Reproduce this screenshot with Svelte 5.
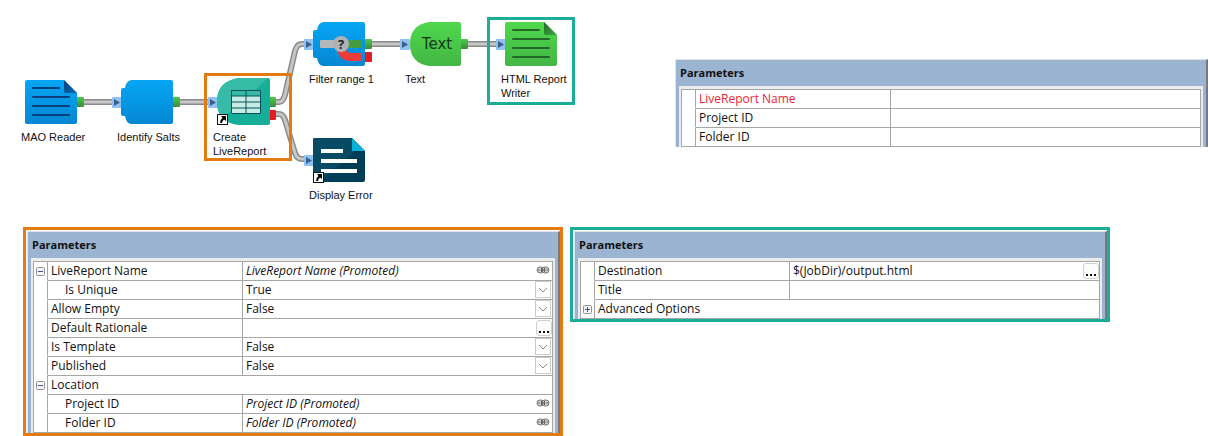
<script lang="ts">
  type Row = {
    name: string;
    value?: string;
    kind?: 'text' | 'select' | 'browse' | 'promoted' | 'group';
    indent?: boolean;
    required?: boolean;
    toggle?: 'open' | 'closed';
  };

  // Grid cell of each component on the protocol canvas
  const nodes = [
    { kind: 'reader', label: ['MAO Reader'], col: 0, row: 1, input: false, outputs: ['pass'] },
    { kind: 'filter', label: ['Identify Salts'], col: 1, row: 1, input: true, outputs: ['pass'] },
    { kind: 'report', label: ['Create', 'LiveReport'], col: 2, row: 1, input: true, outputs: ['pass', 'fail'], shortcut: true },
    { kind: 'range', label: ['Filter range 1'], col: 3, row: 0, input: true, outputs: ['pass', 'fail'] },
    { kind: 'text', label: ['Text'], col: 4, row: 0, input: true, outputs: ['pass'] },
    { kind: 'writer', label: ['HTML Report', 'Writer'], col: 5, row: 0, input: true, outputs: [] },
    { kind: 'error', label: ['Display Error'], col: 3, row: 2, input: true, outputs: [], shortcut: true }
  ];

  const wires = [
    'M83 102H113',
    'M179 102H209',
    'M275 102H279Q283 102 285 95L295 51Q297 44 302 44H305',
    'M275 114H279Q283 114 285 120L295 153Q297 159 302 159H305',
    'M371 44H401',
    'M467 44H497'
  ];

  const marks = [
    { color: 'orange', x: 204, y: 73 },
    { color: 'teal', x: 487, y: 17 }
  ];

  const jobParams: Row[] = [
    { name: 'LiveReport Name', required: true },
    { name: 'Project ID' },
    { name: 'Folder ID' }
  ];

  const reportParams: Row[] = [
    { name: 'LiveReport Name', value: 'LiveReport Name (Promoted)', kind: 'promoted', toggle: 'open' },
    { name: 'Is Unique', value: 'True', kind: 'select', indent: true },
    { name: 'Allow Empty', value: 'False', kind: 'select' },
    { name: 'Default Rationale', kind: 'browse' },
    { name: 'Is Template', value: 'False', kind: 'select' },
    { name: 'Published', value: 'False', kind: 'select' },
    { name: 'Location', kind: 'group', toggle: 'open' },
    { name: 'Project ID', value: 'Project ID (Promoted)', kind: 'promoted', indent: true },
    { name: 'Folder ID', value: 'Folder ID (Promoted)', kind: 'promoted', indent: true }
  ];

  const writerParams: Row[] = [
    { name: 'Destination', value: '$(JobDir)/output.html', kind: 'browse' },
    { name: 'Title' },
    { name: 'Advanced Options', kind: 'group', toggle: 'closed' }
  ];
</script>

{#snippet page(fill: string, fold: string, line: string)}
  <path d="M2 0H39L52 13V42Q52 44 50 44H2Q0 44 0 42V2Q0 0 2 0Z" fill={fill} />
  <path d="M39 0L52 13H41Q39 13 39 11Z" fill={fold} />
  <path d="M8 8H34M8 17H44M8 26H44M8 35H44" stroke={line} stroke-width="2" stroke-linecap="round" />
{/snippet}

{#snippet block()}
  <path d="M10 0H50Q52 0 52 2V42Q52 44 50 44H10Q5 43 4 36H2Q0 36 0 34V10Q0 8 2 8H4Q5 1 10 0Z" fill="url(#blue)" />
{/snippet}

{#snippet art(kind: string)}
  {#if kind === 'reader'}
    {@render page('url(#blue)', 'url(#blue-fold)', '#063f7c')}
  {:else if kind === 'writer'}
    {@render page('url(#green)', 'url(#green-fold)', '#23682a')}
  {:else if kind === 'filter'}
    {@render block()}
  {:else if kind === 'range'}
    {@render block()}
    <path d="M24 27H33Q34 31 38 31H48Q49 31 49 32V38Q49 39 48 39H36Q26 38 24 27Z" fill="#ee3a38" />
    <path d="M8 18H24V26H8Q7 26 7 25V19Q7 18 8 18Z" fill="#b4b8ba" />
    <path d="M30 18H48Q49 18 49 19V26H30Z" fill="#429d43" />
    <circle cx="28" cy="22" r="8" fill="#aeb2b5" />
    <text class="query" x="28" y="27" text-anchor="middle">?</text>
  {:else if kind === 'report'}
    <path d="M22 -2H51Q53 -2 53 0V43Q53 45 51 45H22Q0 43 0 22Q0 1 22 -2Z" fill="#16ae98" />
    <path d="M22 -2H51L6 38Q0 31 0 22Q0 1 22 -2Z" fill="#36bba7" />
    <rect x="14" y="10" width="30" height="24" fill="#c6ece6" />
    <rect x="14" y="10" width="30" height="6" fill="#35b8a4" />
    <path d="M14.500 10.500H43.500V33.500H14.500ZM29 10V34M14 16H44M14 22H44M14 28H44" fill="none" stroke="#08515a" />
  {:else if kind === 'text'}
    <path d="M20 0H50Q52 0 52 2V42Q52 44 50 44H20Q1 41 1 22Q1 3 20 0Z" fill="url(#green)" />
    <text class="glyph" x="28" y="27" text-anchor="middle">Text</text>
  {:else if kind === 'error'}
    <path d="M2 0H39L52 13V42Q52 44 50 44H2Q0 44 0 42V2Q0 0 2 0Z" fill="#003d57" />
    <path d="M2 0H39L45 10L7 44H2Q0 44 0 42V2Q0 0 2 0Z" fill="#074a63" />
    <path d="M39 0L52 13H39Z" fill="#00b2d8" />
    <path d="M8 13H30M8 23H44M8 33H44" stroke="#fff" stroke-width="4" />
  {/if}
{/snippet}

{#snippet parameters(id: string, rows: Row[])}
  <section class="panel" aria-labelledby="{id}-title">
    <h2 id="{id}-title">Parameters</h2>
    <div class="well">
      <table>
        <tbody>
          {#each rows as row, i}
            <tr>
              <td class="gutter">
                {#if row.toggle}
                  <button class="toggle" aria-label={row.name} aria-expanded={row.toggle === 'open'}>
                    <svg width="9" height="9" viewBox="0 0 9 9">
                      <rect x="0.5" y="0.5" width="8" height="8" rx="1" fill="#f6f6f6" stroke="#919191" />
                      <path d={row.toggle === 'open' ? 'M2 4.500H7' : 'M2 4.500H7M4.500 2V7'} stroke="#3f55a5" />
                    </svg>
                  </button>
                {/if}
              </td>
              {#if row.kind === 'group'}
                <th colspan="2" scope="row">{row.name}</th>
              {:else}
                <th scope="row" class:indent={row.indent} class:required={row.required}>
                  <label for="{id}-{i}">{row.name}</label>
                </th>
                <td class="value">
                  <div class="field">
                    {#if row.kind === 'select'}
                      <select id="{id}-{i}" value={row.value}>
                        <option>True</option>
                        <option>False</option>
                      </select>
                      <svg class="arrow" width="17" height="18" viewBox="0 0 17 18" fill="none">
                        <rect x="0.5" y="0.5" width="15" height="16" fill="#fff" stroke="#cacaca" />
                        <path d="M4 7L8 11L12 7" stroke="#8a8a8a" />
                      </svg>
                    {:else}
                      <input
                        id="{id}-{i}"
                        type="text"
                        value={row.value ?? ''}
                        class:promoted={row.kind === 'promoted'}
                        readonly={row.kind === 'promoted'}
                      />
                      {#if row.kind === 'browse'}
                        <button class="browse" aria-label="Browse">
                          <svg width="12" height="14" viewBox="0 0 12 14">
                            <path d="M1 10H3V12H1ZM5 10H7V12H5ZM9 10H11V12H9Z" fill="#111" />
                          </svg>
                        </button>
                      {:else if row.kind === 'promoted'}
                        <svg class="chain" width="14" height="8" viewBox="0 0 14 8" fill="none">
                          <rect x="1" y="1" width="7" height="6" rx="3" fill="#d0d0d0" stroke="#777" />
                          <rect x="6" y="1" width="7" height="6" rx="3" fill="#d0d0d0" stroke="#777" />
                          <path d="M3 3V5M5.500 2V6M8.500 2V6M11 3V5" stroke="#666" />
                          <path d="M5 4H9" stroke="#444" />
                        </svg>
                      {/if}
                    {/if}
                  </div>
                </td>
              {/if}
            </tr>
          {/each}
        </tbody>
      </table>
    </div>
  </section>
{/snippet}

<main>
  <div class="top">
    <div class="canvas">
      <svg class="wires" width="675" height="227" viewBox="0 0 675 227" fill="none">
        <defs>
          <linearGradient id="blue" x1="0" y1="0" x2="0" y2="1">
            <stop offset="0" stop-color="#05a6f4" />
            <stop offset="1" stop-color="#0587d3" />
          </linearGradient>
          <linearGradient id="green" x1="0" y1="0" x2="0" y2="1">
            <stop offset="0" stop-color="#4fd84d" />
            <stop offset="1" stop-color="#43b643" />
          </linearGradient>
          <linearGradient id="pass" x1="0" y1="0" x2="0" y2="1">
            <stop offset="0" stop-color="#4ccb4b" />
            <stop offset="1" stop-color="#3a8d3c" />
          </linearGradient>
          <linearGradient id="blue-fold" x1="0" y1="0" x2="1" y2="1">
            <stop offset="0" stop-color="#033f78" />
            <stop offset="1" stop-color="#0a6db5" />
          </linearGradient>
          <linearGradient id="green-fold" x1="0" y1="0" x2="1" y2="1">
            <stop offset="0" stop-color="#1f6a25" />
            <stop offset="1" stop-color="#45a545" />
          </linearGradient>
        </defs>
        {#each wires as d}
          <path {d} stroke="#8a8a8a" stroke-width="6" />
          <path {d} stroke="#c6c6c6" stroke-width="3" />
        {/each}
      </svg>

      {#each nodes as node}
        <div class="node" style="left: {16 + node.col * 96}px; top: {20 + node.row * 58}px">
          <svg width="68" height="48" viewBox="-9 -2 68 48">
            {#if node.input}
              <rect x="-9" y="17" width="10" height="11" rx="1" fill="#8fc1f5" />
              <path d="M-7 19L-1 22.500L-7 26Z" fill="#3c5f86" />
            {/if}
            {#each node.outputs as out, i}
              <rect
                x="51"
                y={17 + i * 13}
                width="8"
                height="10"
                rx="1"
                fill={out === 'pass' ? 'url(#pass)' : '#e31b23'}
              />
            {/each}
            {@render art(node.kind)}
            {#if node.shortcut}
              <rect x="0.5" y="34.500" width="10" height="10" fill="#fff" stroke="#111" />
              <path d="M4 36H9V41L7 39.500Q5 41 5 43H3Q3 39.500 5.500 38Z" fill="#000" />
            {/if}
          </svg>
          <p>
            {#each node.label as line}<span>{line}</span>{/each}
          </p>
        </div>
      {/each}

      {#each marks as mark}
        <div class="mark {mark.color}" style="left: {mark.x}px; top: {mark.y}px"></div>
      {/each}
    </div>

    {@render parameters('job', jobParams)}
  </div>

  <div class="bottom">
    <div class="frame orange">{@render parameters('report', reportParams)}</div>
    <div class="frame teal">{@render parameters('writer', writerParams)}</div>
  </div>
</main>

<style>
  :global(body) {
    background: #fff;
  }

  main {
    color: #111;
    font: 12px/18px 'Open Sans', 'Noto Sans', sans-serif;
  }

  .top {
    display: grid;
    grid-template-columns: 675px 1fr;
    align-items: start;
  }

  .top > .panel {
    margin-top: 59px;
  }

  .canvas {
    position: relative;
    height: 227px;
  }

  .wires {
    display: block;
  }

  .node {
    position: absolute;
  }

  .node svg {
    display: block;
  }

  .node p {
    margin: 4px 0 0 5px;
    font: 11px/14px 'Liberation Sans', Arial, sans-serif;
    white-space: nowrap;
  }

  .node span {
    display: block;
  }

  .mark {
    position: absolute;
    width: 82px;
    height: 82px;
    border: 3px solid;
  }

  .glyph {
    font: 15px 'DejaVu Sans', sans-serif;
    fill: #123b16;
  }

  .query {
    font: bold 13px 'Open Sans', sans-serif;
    fill: #222;
  }

  .orange {
    border-color: #e37b10;
  }

  .teal {
    border-color: #1aae98;
  }

  .bottom {
    display: grid;
    grid-template-columns: 1fr 1fr;
    gap: 7px;
    align-items: start;
    margin: 0 98px 0 23px;
  }

  .frame {
    padding: 1px 0 0 1px;
    border-width: 3px;
    border-style: solid;
  }

  .panel {
    border-top: 1px solid #dde5ef;
    border-left: 1px solid #dde5ef;
    border-right: 2px solid #77797d;
    background: #9ab4d1;
  }

  h2 {
    margin: 0;
    padding: 0 4px;
    font-size: 11px;
    font-weight: 700;
    line-height: 26px;
  }

  .well {
    margin: 0 3px;
    border: solid #ececec;
    border-width: 3px 2px 0;
  }

  table {
    width: 100%;
    table-layout: fixed;
    border-spacing: 0;
    border-top: 1px solid #a6a6a6;
    border-left: 1px solid #a6a6a6;
    background: #fff;
  }

  th,
  td {
    height: 18px;
    padding: 0;
    border-right: 1px solid #a6a6a6;
    border-bottom: 1px solid #a6a6a6;
    font-weight: 400;
    text-align: left;
  }

  th {
    width: 191px;
    padding-left: 3px;
  }

  .gutter {
    width: 13px;
    border-bottom-color: transparent;
  }

  tr:last-child .gutter {
    border-bottom-color: #a6a6a6;
  }

  .indent {
    width: 177px;
    padding-left: 17px;
  }

  .required {
    color: #ee2438;
  }

  label {
    display: block;
  }

  button {
    display: block;
    padding: 0;
    border: 0;
    background: none;
  }

  button svg {
    display: block;
  }

  .toggle {
    margin: 0 auto;
  }

  .field {
    position: relative;
    display: flex;
    align-items: center;
    height: 18px;
  }

  input,
  select {
    flex: 1;
    min-width: 0;
    height: 18px;
    margin: 0;
    padding: 0 3px;
    border: 0;
    outline: 0;
    appearance: none;
    background: none;
    color: inherit;
    font: inherit;
  }

  .promoted {
    font-style: italic;
  }

  .arrow {
    position: absolute;
    right: 0;
    pointer-events: none;
  }

  .browse {
    padding: 0 1px;
    border: 1px solid #cfcfcf;
    border-radius: 3px;
    background: #fcfcfc;
  }

  .chain {
    margin: 0 2px 2px 0;
  }
</style>
